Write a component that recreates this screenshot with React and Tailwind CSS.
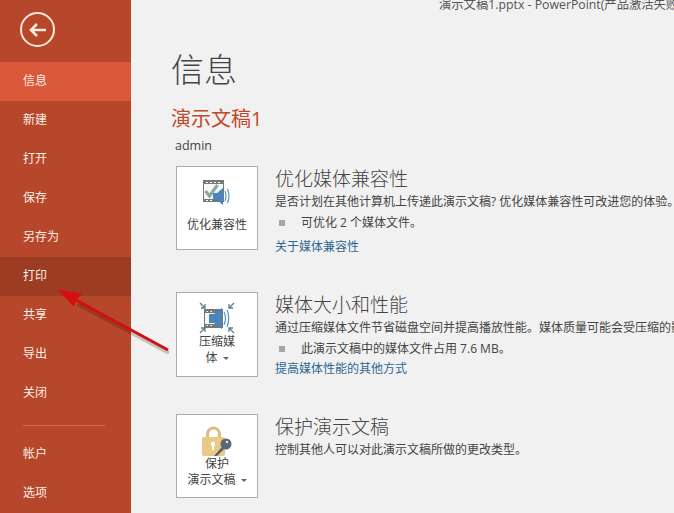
const font = "font-['Open_Sans','Noto_Sans_CJK_SC',sans-serif]";

const navTop = ['信息', '新建', '打开', '保存', '另存为', '打印', '共享', '导出', '关闭'];

function NavItem({ label }) {
  let bg = '';
  if (label === '信息') bg = 'bg-[#d9583a]';
  if (label === '打印') bg = 'bg-[#9c3c22]';
  return (
    <div className={`h-[39px] flex items-center pl-[23px] pb-[2px] text-[12px] text-[#fbeee8] ${bg}`}>
      {label}
    </div>
  );
}

function CompatIcon() {
  return (
    <svg width="28" height="26" viewBox="0 0 28 26">
      <rect x="0.5" y="0.5" width="20" height="21" fill="#f7f7f7" stroke="#777" />
      <rect x="1" y="1" width="19" height="3" fill="#777" />
      <rect x="1" y="19" width="19" height="3" fill="#777" />
      <path d="M3 2h2v1H3zM7 2h2v1H7zM11 2h2v1h-2zM15 2h2v1h-2zM3 20h2v1H3zM7 20h2v1H7z" fill="#fff" />
      <path d="M2.5 11l4 5 8-11" fill="none" stroke="#86a89e" strokeWidth="3" />
      <path d="M10 13h4l6-5v17l-6-5h-4z" fill="#4a85bd" />
      <path d="M22 11q2 5 0 10M24.5 9q3 7 0 14" fill="none" stroke="#5a93c6" strokeWidth="1.2" />
    </svg>
  );
}

function CompressIcon() {
  return (
    <svg width="36" height="32" viewBox="0 0 36 32">
      <path d="M1 1l5 5M6 2v4H2M35 1l-5 5M30 2v4h4M1 31l5-5M6 30v-4H2M35 31l-5-5M30 30v-4h4" fill="none" stroke="#55808f" strokeWidth="1.3" />
      <rect x="5.5" y="7.5" width="18" height="18" fill="#f7f7f7" stroke="#777" />
      <rect x="6" y="8" width="17" height="3" fill="#777" />
      <rect x="6" y="22" width="17" height="3" fill="#777" />
      <path d="M7.5 9h1.5v1H7.500zM11.500 9H13v1h-1.500zM7.500 23H9v1H7.500zM11.500 23H13v1h-1.500z" fill="#fff" />
      <path d="M10 12h5l8-6v21l-8-6h-5z" fill="#4a85bd" />
      <path d="M25 10q3 6 0 13M28 8q3.500 8 0 17" fill="none" stroke="#5a93c6" strokeWidth="1.2" />
    </svg>
  );
}

function LockIcon() {
  return (
    <svg width="30" height="30" viewBox="0 0 30 30">
      <path d="M5.500 13V8a6 6 0 0 1 12 0v5" fill="none" stroke="#dcbd80" strokeWidth="3" />
      <rect x="0" y="11" width="23" height="19" rx="2" fill="#e9c888" />
      <circle cx="11" cy="18" r="2.200" fill="#fff" />
      <rect x="10" y="19" width="2" height="5" fill="#fff" />
      <path d="M12 30l8-9 2 2-7 7z" fill="#555e66" />
      <circle cx="24" cy="18" r="5.500" fill="#5d6770" />
      <circle cx="25" cy="16" r="1.300" fill="#d8dde0" />
    </svg>
  );
}

function Caret() {
  return <span className="inline-block ml-[5px] mb-[2px] border-x-[3px] border-t-[3px] border-x-transparent border-t-[#666]" />;
}

function Card({ height, icon, children, pad, leading }) {
  return (
    <div className={`w-[82px] shrink-0 ${height} flex flex-col items-center bg-white border border-[#ababab] ${pad}`}>
      {icon}
      <div className={`text-[12px] ${leading} text-[#444] text-center whitespace-nowrap`}>{children}</div>
    </div>
  );
}

function Section({ card, title, desc, bullet, link, className, linkClass }) {
  return (
    <div className={`flex ${className}`}>
      {card}
      <div className="ml-[17px] min-w-0 whitespace-nowrap">
        <div className="text-[19px] leading-[26px] text-[#444] font-light">{title}</div>
        <div className="text-[12px] leading-[18px] mt-[1px] text-[#444]">{desc}</div>
        {bullet && (
          <div className="flex items-center text-[12px] leading-[18px] mt-[3px] text-[#444]">
            <span className="w-[6px] h-[6px] bg-[#a6a6a6] ml-[4px] mr-[16px]" />
            {bullet}
          </div>
        )}
        {link && <div className={`text-[12px] leading-[18px] text-[#2f6690] ${linkClass}`}>{link}</div>}
      </div>
    </div>
  );
}

export default function App() {
  return (
    <div className={`relative w-[674px] h-[513px] flex overflow-hidden ${font}`}>
      <aside className="w-[131px] shrink-0 bg-[#b7472a] flex flex-col">
        <div className="h-[62px] pl-[20px] pt-[12px]">
          <div className="w-[35px] h-[35px] rounded-full border-2 border-[#fbe9dc] flex items-center justify-center">
            <svg width="20" height="16" viewBox="0 0 20 16">
              <path d="M18 8H3M9 2L3 8l6 6" fill="none" stroke="#fbe9dc" strokeWidth="2.6" />
            </svg>
          </div>
        </div>
        {navTop.map((n) => (
          <NavItem key={n} label={n} />
        ))}
        <div className="h-px bg-[#d1664a] ml-[23px] w-[82px] mt-[12px] mb-[9px]" />
        <NavItem label="帐户" />
        <NavItem label="选项" />
      </aside>

      <main className="flex-1 min-w-0 bg-[#f1f1f1] overflow-hidden">
        <div className="h-[10px] pl-[308px] text-[12.3px] leading-[14px] -mt-[2px] text-[#555] whitespace-nowrap">
          演示文稿1.pptx - PowerPoint(产品激活失败
        </div>
        <div className="pl-[40px] pt-[42px]">
          <h1 className="text-[33px] leading-[40px] text-[#444] font-light">信息</h1>
          <div className="mt-[16px] text-[20px] leading-[26px] text-[#c0492d]">演示文稿1</div>
          <div className="mt-[5px] ml-[4px] text-[12.5px] leading-[18px] text-[#444]">admin</div>
        </div>
        <div className="pl-[45px] pt-[11px]">
          <Section
            className="h-[84px]"
            card={
              <Card height="h-[84px]" pad="pt-[13px]" leading="leading-[18px] mt-[10px]" icon={<CompatIcon />}>
                优化兼容性
              </Card>
            }
            title="优化媒体兼容性"
            desc="是否计划在其他计算机上传递此演示文稿? 优化媒体兼容性可改进您的体验。"
            bullet="可优化 2 个媒体文件。"
            link="关于媒体兼容性"
            linkClass="mt-[6px]"
          />
          <Section
            className="mt-[42px] h-[85px]"
            card={
              <Card height="h-[85px]" pad="pt-[9px]" leading="leading-[16px]" icon={<CompressIcon />}>
                压缩媒
                <br />
                体<Caret />
              </Card>
            }
            title="媒体大小和性能"
            desc="通过压缩媒体文件节省磁盘空间并提高播放性能。媒体质量可能会受压缩的影响。"
            bullet="此演示文稿中的媒体文件占用 7.6 MB。"
            link="提高媒体性能的其他方式"
            linkClass="mt-[2px]"
          />
          <Section
            className="mt-[37px] h-[84px]"
            card={
              <Card height="h-[84px]" pad="pt-[11px]" leading="leading-[16px]" icon={<LockIcon />}>
                保护
                <br />
                演示文稿<Caret />
              </Card>
            }
            title="保护演示文稿"
            desc="控制其他人可以对此演示文稿所做的更改类型。"
          />
        </div>
      </main>

      <svg className="absolute left-0 top-0 pointer-events-none" width="674" height="513" viewBox="0 0 674 513">
        <path d="M169 353L78 304" stroke="#00000030" strokeWidth="4" fill="none" />
        <path d="M168 350L76 300" stroke="#d40f12" strokeWidth="3" fill="none" />
        <path d="M57 289L82 294L76 300L74 307z" fill="#d40f12" />
      </svg>
    </div>
  );
}
